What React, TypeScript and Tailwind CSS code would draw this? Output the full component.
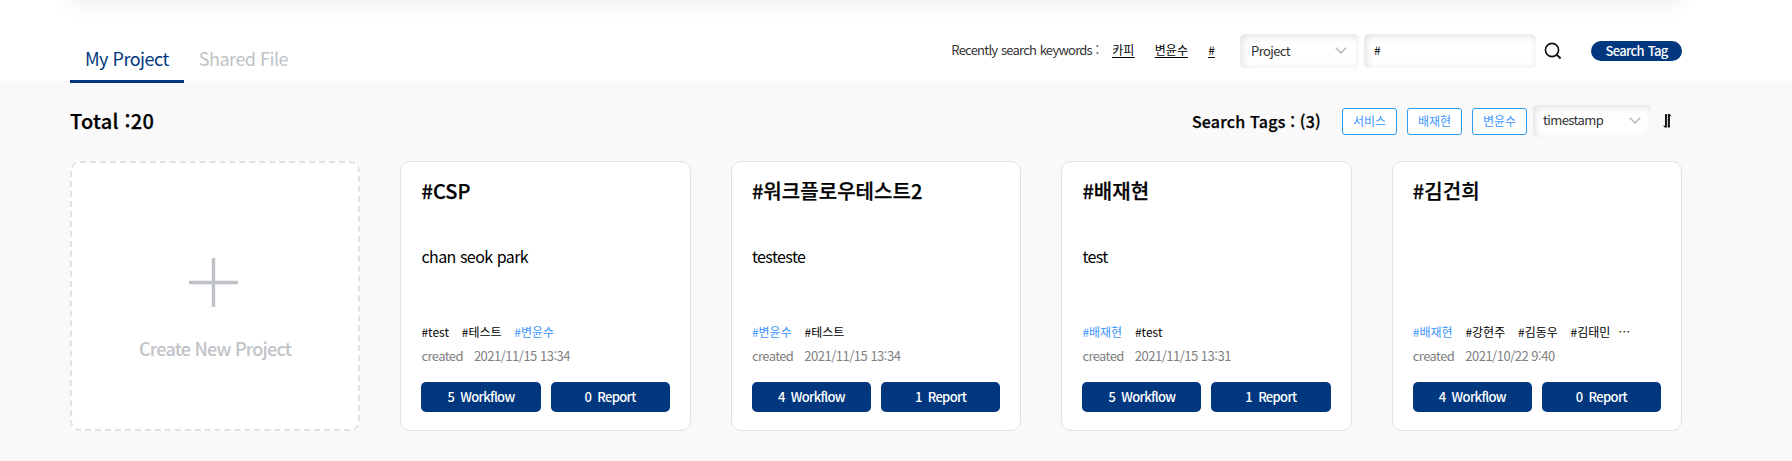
type Tag = { text: string; active?: boolean };
type Project = {
  title: string;
  description: string;
  tags: Tag[];
  more?: boolean;
  created: string;
  workflows: number;
  reports: number;
};

const projects: Project[] = [
  {
    title: '#CSP',
    description: 'chan seok park',
    tags: [{ text: '#test' }, { text: '#테스트' }, { text: '#변윤수', active: true }],
    created: '2021/11/15 13:34',
    workflows: 5,
    reports: 0,
  },
  {
    title: '#워크플로우테스트2',
    description: 'testeste',
    tags: [{ text: '#변윤수', active: true }, { text: '#테스트' }],
    created: '2021/11/15 13:34',
    workflows: 4,
    reports: 1,
  },
  {
    title: '#배재현',
    description: 'test',
    tags: [{ text: '#배재현', active: true }, { text: '#test' }],
    created: '2021/11/15 13:31',
    workflows: 5,
    reports: 1,
  },
  {
    title: '#김건희',
    description: '',
    tags: [{ text: '#배재현', active: true }, { text: '#강현주' }, { text: '#김동우' }, { text: '#김태민' }],
    more: true,
    created: '2021/10/22 9:40',
    workflows: 4,
    reports: 0,
  },
];

function Chevron() {
  return (
    <svg className="h-[7px] w-[12px]" viewBox="0 0 12 7" fill="none" stroke="#b4b4b4" strokeWidth="1.4">
      <path d="M0.8 0.8 L6 6 L11.2 0.8" />
    </svg>
  );
}

function CountButton({ count, label }: { count: number; label: string }) {
  return (
    <button className="flex h-[30px] flex-1 items-center justify-center gap-[6px] rounded-[5px] bg-[#00377f] pb-[1px] text-[13px] font-medium tracking-[-0.65px] text-white">
      <span>{count}</span>
      <span>{label}</span>
    </button>
  );
}

function ProjectCard({ project }: { project: Project }) {
  return (
    <article className="flex h-[270px] flex-col rounded-[10px] border border-[#e1e2e5] bg-white px-[20px] pt-[14px]">
      <h2 className="h-[30px] text-[20px] leading-[29px] font-medium tracking-[0.05px] [-webkit-text-stroke:0.25px_currentColor]">
        {project.title}
      </h2>
      <p className="mt-[38px] h-[24px] text-[16px] leading-[24px] tracking-[-0.6px] [word-spacing:0.4px]">
        {project.description}
      </p>
      <div className="mt-[54px] flex h-[20px] gap-[12.8px] text-[12px] leading-[19px]">
        {project.tags.map((tag) => (
          <span key={tag.text} className={tag.active ? 'text-[#3c96ff]' : ''}>
            {tag.text}
          </span>
        ))}
        {project.more && <span className="-ml-[5px]">⋯</span>}
      </div>
      <div className="mt-[4px] flex h-[20px] gap-[11px] text-[13px] leading-[20px] text-[#808080]">
        <span className="tracking-[-0.6px]">created</span>
        <span className="tracking-[-0.5px]">{project.created}</span>
      </div>
      <div className="mt-[16px] flex gap-[10px]">
        <CountButton count={project.workflows} label="Workflow" />
        <CountButton count={project.reports} label="Report" />
      </div>
    </article>
  );
}

export default function App() {
  return (
    <div
      lang="ko"
      className="h-[461px] overflow-hidden bg-[#f9f9f9] font-['Noto_Sans_CJK_KR',sans-serif] text-black"
    >
      <header className="flex h-[81px] flex-col bg-white pr-[110px] pl-[70px]">
        <div className="-mt-[20px] h-[20px] shrink-0 rounded-[10px] shadow-[0_0_25px_rgba(0,0,0,0.11)]" />
        <div className="flex items-start justify-between">
          <nav className="mt-[35px] flex text-[18px] tracking-[-0.5px]">
            <button className="flex h-[48px] items-center border-b-[3px] border-[#00377f] px-[15px] pt-[2px] text-[#00377f]">
              My Project
            </button>
            <button className="flex h-[48px] items-center border-b-[3px] border-transparent px-[15px] pt-[2px] text-[#c0c3c7]">
              Shared File
            </button>
          </nav>
          <div className="mt-[33px] flex h-[35px] items-center">
            <span className="pb-[2px] text-[13px] tracking-[-0.75px] text-[#333] [word-spacing:0.6px]">
              Recently search keywords :
            </span>
            <div className="ml-[14px] flex gap-[20.4px] pb-[2px] text-[12px] underline underline-offset-[2px]">
              <a>카피</a>
              <a>변윤수</a>
              <a>#</a>
            </div>
            <div className="ml-[25px] flex h-[34px] w-[119px] items-center justify-between rounded-[5px] pr-[12px] pl-[11px] text-[13px] tracking-[-0.6px] text-[#333] shadow-[inset_2px_2px_8px_rgba(0,0,0,0.12)]">
              Project
              <Chevron />
            </div>
            <div className="ml-[5px] flex h-[34px] w-[172px] items-center rounded-[5px] pb-[2px] pl-[10px] text-[12px] shadow-[inset_2px_2px_8px_rgba(0,0,0,0.12)]">
              #
            </div>
            <svg
              className="ml-[8px] h-[18px] w-[18px]"
              viewBox="0 0 18 18"
              fill="none"
              stroke="#111"
              strokeWidth="1.6"
            >
              <circle cx="8" cy="8" r="6.6" />
              <path d="M12.6 12.6 L16.6 16.4" strokeWidth="2" />
            </svg>
            <button className="ml-[29px] h-[20px] w-[91px] rounded-full bg-[#00377f] text-[13px] leading-[19px] font-medium tracking-[-0.7px] text-white [word-spacing:1px]">
              Search Tag
            </button>
          </div>
        </div>
      </header>
      <main className="pr-[110px] pl-[70px]">
        <div className="flex h-[80px] items-center justify-between">
          <h1 className="text-[20px] font-medium tracking-[0.25px] [-webkit-text-stroke:0.25px_currentColor]">
            Total :20
          </h1>
          <div className="flex items-center">
            <h2 className="text-[16px] font-medium tracking-[0.2px] [-webkit-text-stroke:0.25px_currentColor]">
              Search Tags : (3)
            </h2>
            <div className="ml-[21px] flex gap-[10px]">
              {['서비스', '배재현', '변윤수'].map((tag) => (
                <span
                  key={tag}
                  className="flex h-[27px] w-[55px] items-center justify-center rounded-[3px] border border-[#2a9df4] bg-white text-[12px] text-[#3c96ff]"
                >
                  {tag}
                </span>
              ))}
            </div>
            <div className="ml-[6px] flex h-[32px] w-[118px] items-center justify-between rounded-[5px] bg-white pr-[10px] pb-[2px] pl-[10px] text-[13px] tracking-[-0.6px] text-[#333] shadow-[inset_2px_2px_8px_rgba(0,0,0,0.12)]">
              timestamp
              <Chevron />
            </div>
            <svg className="mr-[10px] ml-[12px] h-[14px] w-[9px]" viewBox="0 0 9 14" fill="#111">
              <path d="M2 0H3.9V13.6H1.8L0 11.8H2Z" />
              <path d="M4.8 0H6.6L8.4 2.2H6.9V13.6H4.8Z" />
            </svg>
          </div>
        </div>
        <section className="grid grid-cols-5 gap-x-[2.5%]">
          <button className="flex h-[270px] flex-col items-center rounded-[10px] border-2 border-dashed border-[#e1e2e8] bg-white pt-[95px] text-[#c0c3c7]">
            <svg className="mr-[3px] h-[49px] w-[49px]" viewBox="0 0 49 49" stroke="#bfc2c6" strokeWidth="3.4">
              <path d="M0 24.5H49M24.5 0V49" />
            </svg>
            <span className="mt-[28px] text-[18px] leading-[26px] font-medium tracking-[-0.75px]">
              Create New Project
            </span>
          </button>
          {projects.map((project) => (
            <ProjectCard key={project.title} project={project} />
          ))}
        </section>
      </main>
    </div>
  );
}
